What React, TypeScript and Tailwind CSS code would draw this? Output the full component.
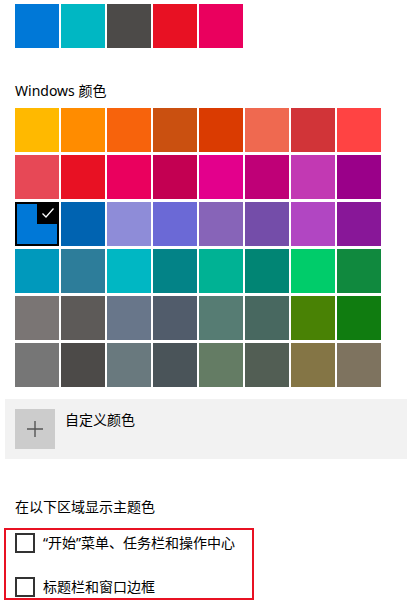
const recent = ['#0078D7', '#00B7C3', '#4C4A48', '#E81123', '#EA005E']

const palette = [
  '#FFB900', '#FF8C00', '#F7630C', '#CA5010', '#DA3B01', '#EF6950', '#D13438', '#FF4343',
  '#E74856', '#E81123', '#EA005E', '#C30052', '#E3008C', '#BF0077', '#C239B3', '#9A0089',
  '#0078D7', '#0063B1', '#8E8CD8', '#6B69D6', '#8764B8', '#744DA9', '#B146C2', '#881798',
  '#0099BC', '#2D7D9A', '#00B7C3', '#038387', '#00B294', '#018574', '#00CC6A', '#10893E',
  '#7A7574', '#5D5A58', '#68768A', '#515C6B', '#567C73', '#486860', '#498205', '#107C10',
  '#767676', '#4C4A48', '#69797E', '#4A5459', '#647C64', '#525E54', '#847545', '#7E735F',
]

const SELECTED = 16

function Swatch({ color, selected }: { color: string; selected?: boolean }) {
  return (
    <div
      className={`relative w-[44px] h-[44px] ${selected ? 'ring-2 ring-inset ring-black' : ''}`}
      style={{ backgroundColor: color }}
    >
      {selected && (
        <div className="absolute top-0 right-0 w-[22px] h-[22px] bg-black flex items-center justify-center">
          <svg width="14" height="12" viewBox="0 0 14 12" fill="none">
            <path d="M1.5 6.5 L5 10 L12.5 1.5" stroke="white" strokeWidth="1.3" />
          </svg>
        </div>
      )}
    </div>
  )
}

function Checkbox({ label }: { label: string }) {
  return (
    <div className="flex items-center h-[20px]">
      <div className="w-[20px] h-[20px] border-2 border-[#333333] bg-white shrink-0" />
      <span className="ml-[8px] text-[14px] leading-[20px] text-black">{label}</span>
    </div>
  )
}

export default function App() {
  return (
    <div
      className="w-[407px] h-[607px] bg-white overflow-hidden text-black"
      style={{ fontFamily: '"Noto Sans", "Noto Sans CJK SC", sans-serif' }}
    >
      {/* Recent colours */}
      <div className="pt-[4px] pl-[15px] flex gap-[2px]">
        {recent.map((c) => (
          <Swatch key={c} color={c} />
        ))}
      </div>

      {/* Windows colours */}
      <div className="mt-[33px] pl-[15px] text-[14px] leading-[20px]">Windows 颜色</div>
      <div className="mt-[7px] pl-[15px] grid grid-cols-[repeat(8,44px)] gap-x-[2px] gap-y-[3px]">
        {palette.map((c, i) => (
          <Swatch key={i} color={c} selected={i === SELECTED} />
        ))}
      </div>

      {/* Custom colour */}
      <div className="mt-[12px] ml-[5px] h-[60px] bg-[#f2f2f2] flex items-start pt-[10px] pl-[10px]">
        <div className="w-[40px] h-[40px] bg-[#cccccc] flex items-center justify-center">
          <svg width="18" height="18" viewBox="0 0 18 18">
            <path d="M9 1 V17 M1 9 H17" stroke="#555555" strokeWidth="1.4" />
          </svg>
        </div>
        <span className="ml-[10px] mt-[1px] text-[14px] leading-[20px]">自定义颜色</span>
      </div>

      {/* Accent surfaces */}
      <div className="mt-[38px] pl-[15px] text-[14px] leading-[20px]">在以下区域显示主题色</div>
      <div className="mt-[11px] ml-[4px] w-[250px] h-[72px] border-2 border-[#e81123] pl-[9px] pt-[3px] flex flex-col gap-[24px]">
        <Checkbox label="“开始”菜单、任务栏和操作中心" />
        <Checkbox label="标题栏和窗口边框" />
      </div>
    </div>
  )
}
